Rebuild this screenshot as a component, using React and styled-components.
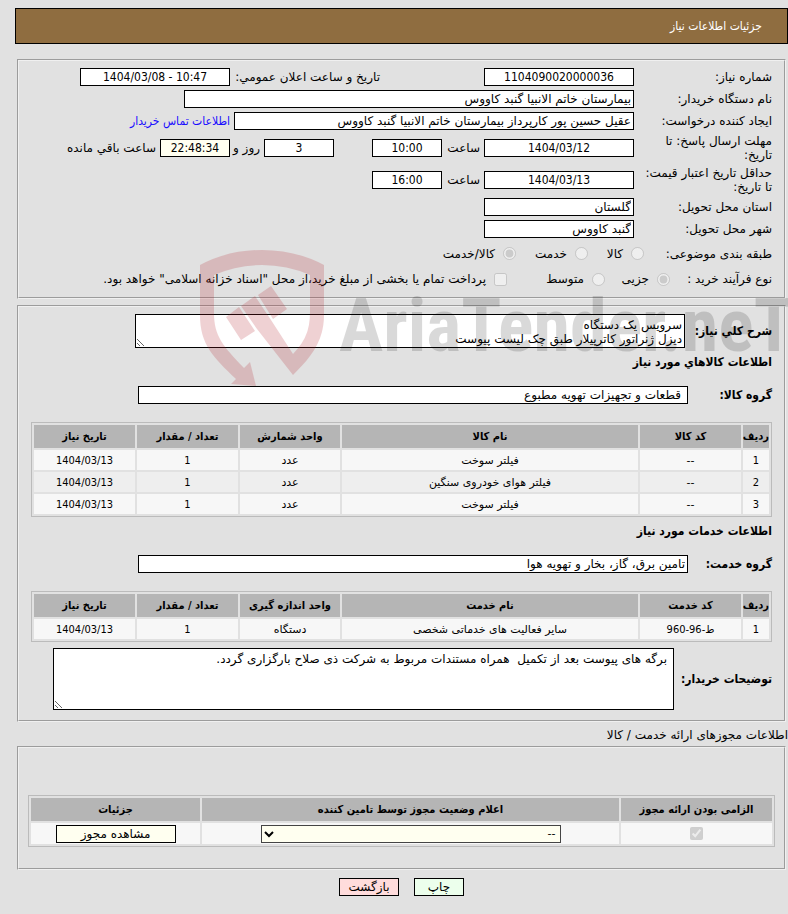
import React from "react";
import styled, { createGlobalStyle, css } from "styled-components";

const WIDE = '"DejaVu Sans", sans-serif';
const CONDENSED = '"DejaVu Sans Condensed", "DejaVu Sans", sans-serif';

const GlobalStyle = createGlobalStyle`
  *, *::before, *::after { box-sizing: border-box; }
  body {
    margin: 0;
    background: #e1e1e1;
    color: #000;
    font: 12px/14px ${WIDE};
  }
  input, textarea, select, button { font: inherit; color: inherit; }
`;

const Page = styled.main`
  position: relative;
  padding: 8px 0 16px 15px;
  overflow: hidden;
`;

const TitleBar = styled.header`
  display: flex;
  align-items: center;
  height: 36px;
  margin-bottom: 15px;
  padding: 0 25px;
  border: 1px solid #000;
  background: #8f6d40;
`;

const Title = styled.h1`
  margin: 0;
  color: #fff;
  font: 12px/14px ${CONDENSED};
`;

const Panel = styled.fieldset`
  min-width: 0;
  margin: 0 2px 6px;
  padding: ${(p) => p.$pad || "5px 12px 6px"};
  border: 2px groove #f0f0f0;
`;

const Row = styled.div`
  display: flex;
  align-items: center;
  min-height: ${(p) => p.$h || 22}px;
`;

const Label = styled.label`
  flex: none;
  width: ${(p) => (p.$w ? `${p.$w}px` : "auto")};
  padding-inline-end: ${(p) => p.$end || 0}px;
`;

const Bold = styled(Label)`
  font-family: ${CONDENSED};
  font-weight: bold;
`;

const boxed = css`
  border: 1px solid #000;
  border-radius: 0;
  background: ${(p) => p.$bg || "#fff"};
  outline: none;
`;

const Field = styled.input`
  ${boxed}
  flex: 0 1 ${(p) => p.$w}px;
  min-width: 0;
  width: ${(p) => p.$w}px;
  height: 18px;
  padding: 0 ${(p) => p.$pad || 2}px;
`;

const NumberField = styled(Field)`
  font-family: ${CONDENSED};
  text-align: center;
`;

const Unit = styled.span`
  flex: none;
  width: ${(p) => (p.$w ? `${p.$w}px` : "auto")};
  margin-inline: 4px;
  white-space: nowrap;
`;

const Spacer = styled.span`
  flex: none;
  width: ${(p) => p.$w}px;
`;

const ContactLink = styled.a`
  margin-inline-start: 4px;
  color: #1a0dff;
  font-family: ${CONDENSED};
  text-decoration: none;
  white-space: nowrap;
`;

const Choice = styled.label`
  display: flex;
  align-items: center;
  flex: ${(p) => (p.$w ? "none" : "0 1 auto")};
  width: ${(p) => (p.$w ? `${p.$w}px` : "auto")};
  gap: 8px;
  white-space: nowrap;
`;

const Tick = styled.input`
  flex: none;
  width: 13px;
  height: 13px;
  margin: 0;
  vertical-align: middle;
`;

const Area = styled.textarea`
  ${boxed}
  display: block;
  flex: 0 1 ${(p) => p.$w}px;
  min-width: 0;
  width: ${(p) => p.$w}px;
  height: ${(p) => p.$h}px;
  padding: ${(p) => p.$pad};
  overflow: hidden;
`;

const Heading = styled.h2`
  display: flex;
  align-items: center;
  margin: 0;
  height: 28px;
  font: bold 12px/14px ${CONDENSED};
`;

const Grid = styled.table`
  width: 100%;
  table-layout: fixed;
  border: 1px solid #bbb;
  border-spacing: 2px;
  text-align: center;
  font-size: 11px;

  th {
    height: 23px;
    padding: 0;
    background: #b5b5b5;
    font-family: ${CONDENSED};
    white-space: nowrap;
  }
  td { height: ${(p) => p.$rowHeight || 20}px; padding: 0; background: #f7f7f7; }
  tbody tr:nth-child(even) td { background: #eee; }
`;

const Cell = styled.td`
  && { padding-top: 2px; }
  font-family: ${(p) => (p.$numeric ? CONDENSED : WIDE)};
`;

const Col = styled.col`
  width: ${(p) => (p.$w ? `${p.$w}px` : "auto")};
`;

const GridWrap = styled.div`
  margin: ${(p) => p.$m};
`;

const StatusSelect = styled.select`
  ${boxed}
  display: block;
  width: 300px;
  max-width: 100%;
  height: 18px;
  margin: 0 auto;
  padding: 0;
  border-color: #444;
`;

const Button = styled.button`
  ${boxed}
  width: ${(p) => p.$w}px;
  height: 18px;
  padding: 0;
  font-size: 12px;
  line-height: 16px;
  cursor: pointer;
`;

const Section = styled.p`
  margin: 0 0 4px;
`;

const Footer = styled.footer`
  display: flex;
  justify-content: center;
  gap: 15px;
  padding-top: 2px;
`;

const Watermark = styled.div`
  position: absolute;
  top: 250px;
  left: 200px;
  display: flex;
  direction: ltr;
  gap: 14px;
  pointer-events: none;
`;

const Brand = styled.span`
  padding-top: 32px;
  color: rgba(0, 0, 0, 0.15);
  font: bold 74px/88px "Liberation Sans Narrow", "Roboto Condensed", "Liberation Sans", sans-serif;
  white-space: nowrap;
`;

function Shield() {
  return (
    <svg width="125" height="137" viewBox="200 250 125 137" fill="#b41e28" opacity="0.2" aria-hidden="true">
      <path d="M200 265Q228 250 262 250Q296 250 324 265V315C324 343 309 359 293 375L257 329L241 306L255 296L271 320L293 354C304 342 310 332 310 312V275Q287 265 262 265Q237 265 214 275V313C214 336 223 346 244 368L250 362L256 386L231 384L236 379C213 357 200 344 200 315Z" />
      <path d="M226 317L239 307L255 331L241 340ZM258 295L271 286L287 309L273 319Z" />
    </svg>
  );
}

function DataTable({ label, widths, heads, rows }) {
  return (
    <Grid aria-label={label}>
      <colgroup>
        {widths.map((w, i) => <Col key={i} $w={w} />)}
      </colgroup>
      <thead>
        <tr>{heads.map((h) => <th key={h} scope="col">{h}</th>)}</tr>
      </thead>
      <tbody>
        {rows.map((row, i) => (
          <tr key={i}>
            {row.map((cell, j) => <Cell key={j} $numeric={/\d/.test(cell)}>{cell}</Cell>)}
          </tr>
        ))}
      </tbody>
    </Grid>
  );
}

const COLUMNS = [26, 101, null, 100, 101, 101];

export default function App() {
  return (
    <Page dir="rtl" lang="fa">
      <GlobalStyle />
      <TitleBar><Title>جزئیات اطلاعات نیاز</Title></TitleBar>

      <Panel>
        <Row>
          <Label htmlFor="number" $w={138}>شماره نیاز:</Label>
          <NumberField id="number" readOnly $w={150} value="1104090020000036" />
          <Spacer $w={104} />
          <Label htmlFor="announced" $w={150}>تاريخ و ساعت اعلان عمومي:</Label>
          <NumberField id="announced" readOnly $w={150} dir="ltr" value="1404/03/08 - 10:47" />
        </Row>
        <Row>
          <Label htmlFor="org" $w={138}>نام دستگاه خریدار:</Label>
          <Field id="org" readOnly $w={450} value="بیمارستان خاتم الانبیا گنبد کاووس" />
        </Row>
        <Row>
          <Label htmlFor="creator" $w={138}>ایجاد کننده درخواست:</Label>
          <Field id="creator" readOnly $w={400} value="عقیل حسین پور کارپرداز بیمارستان خاتم الانبیا گنبد کاووس" />
          <ContactLink href="#contact">اطلاعات تماس خریدار</ContactLink>
        </Row>
        <Row $h={32}>
          <Label htmlFor="deadline" $w={138} $end={12}>مهلت ارسال پاسخ: تا تاریخ:</Label>
          <NumberField id="deadline" readOnly $w={150} value="1404/03/12" />
          <Unit $w={34}>ساعت</Unit>
          <NumberField aria-label="ساعت پاسخ" readOnly $w={70} value="10:00" />
          <Spacer $w={38} />
          <NumberField aria-label="روز باقی مانده" readOnly $w={70} value="3" />
          <Unit $w={26}>روز و</Unit>
          <NumberField aria-label="ساعت باقی مانده" readOnly $w={70} $bg="#fffff0" value="22:48:34" />
          <Unit>ساعت باقي مانده</Unit>
        </Row>
        <Row $h={32}>
          <Label htmlFor="validity" $w={138} $end={8}>حداقل تاریخ اعتبار قیمت: تا تاریخ:</Label>
          <NumberField id="validity" readOnly $w={150} value="1404/03/13" />
          <Unit $w={34}>ساعت</Unit>
          <NumberField aria-label="ساعت اعتبار" readOnly $w={70} value="16:00" />
        </Row>
        <Row>
          <Label htmlFor="province" $w={138}>استان محل تحویل:</Label>
          <Field id="province" readOnly $w={150} value="گلستان" />
        </Row>
        <Row>
          <Label htmlFor="city" $w={138}>شهر محل تحویل:</Label>
          <Field id="city" readOnly $w={150} value="گنبد کاووس" />
        </Row>
        <Row $h={27}>
          <Label as="span" $w={128}>طبقه بندی موضوعی:</Label>
          <Choice $w={56}><Tick type="radio" name="subject" disabled />کالا</Choice>
          <Choice $w={72}><Tick type="radio" name="subject" disabled />خدمت</Choice>
          <Choice><Tick type="radio" name="subject" disabled defaultChecked />کالا/خدمت</Choice>
        </Row>
        <Row $h={24}>
          <Label as="span" $w={102}>نوع فرآیند خرید :</Label>
          <Choice $w={65}><Tick type="radio" name="process" disabled defaultChecked />جزیی</Choice>
          <Choice $w={98}><Tick type="radio" name="process" disabled />متوسط</Choice>
          <Choice><Tick type="checkbox" disabled />پرداخت تمام یا بخشی از مبلغ خرید،از محل "اسناد خزانه اسلامی" خواهد بود.</Choice>
        </Row>
      </Panel>

      <Panel $pad="7px 12px 10px">
        <Row $h={34}>
          <Bold htmlFor="summary" $w={87}>شرح کلي نياز:</Bold>
          <Area id="summary" readOnly $w={550} $h={34} $pad="3px 2px 0" value={"سرویس یک دستگاه\nدیزل ژنراتور کاترپیلار طبق چک لیست پیوست"} />
        </Row>
        <Heading>اطلاعات کالاهاي مورد نياز</Heading>
        <Row $h={38}>
          <Bold htmlFor="goods" $w={84}>گروه کالا:</Bold>
          <Field id="goods" readOnly $w={550} $pad={6} value="قطعات و تجهیزات تهویه مطبوع" />
        </Row>
        <GridWrap $m="8px 0 0">
          <DataTable
            label="کالاها"
            widths={COLUMNS}
            heads={["ردیف", "کد کالا", "نام کالا", "واحد شمارش", "تعداد / مقدار", "تاریخ نیاز"]}
            rows={[
              ["1", "--", "فیلتر سوخت", "عدد", "1", "1404/03/13"],
              ["2", "--", "فیلتر هوای خودروی سنگین", "عدد", "1", "1404/03/13"],
              ["3", "--", "فیلتر سوخت", "عدد", "1", "1404/03/13"],
            ]}
          />
        </GridWrap>
        <Heading>اطلاعات خدمات مورد نیاز</Heading>
        <Row $h={38}>
          <Bold htmlFor="services" $w={84}>گروه خدمت:</Bold>
          <Field id="services" readOnly $w={550} value="تامین برق، گاز، بخار و تهویه هوا" />
        </Row>
        <GridWrap $m="8px 0 6px">
          <DataTable
            label="خدمات"
            widths={COLUMNS}
            heads={["ردیف", "کد خدمت", "نام خدمت", "واحد اندازه گیری", "تعداد / مقدار", "تاریخ نیاز"]}
            rows={[["1", "ط-96-960", "سایر فعالیت های خدماتی شخصی", "دستگاه", "1", "1404/03/13"]]}
          />
        </GridWrap>
        <Row>
          <Bold htmlFor="notes" $w={98}>توضیحات خریدار:</Bold>
          <Area id="notes" readOnly $w={621} $h={62} $pad="3px 6px" value="برگه های پیوست بعد از تکمیل  همراه مستندات مربوط به شرکت ذی صلاح بارگزاری گردد." />
        </Row>
      </Panel>

      <Section>اطلاعات مجوزهای ارائه خدمت / کالا</Section>
      <Panel $pad="47px 9px 21px">
        <Grid aria-label="مجوزها" $rowHeight={21}>
          <colgroup><Col $w={151} /><Col /><Col $w={169} /></colgroup>
          <thead>
            <tr>
              <th scope="col">الزامی بودن ارائه مجوز</th>
              <th scope="col">اعلام وضعیت مجوز توسط تامین کننده</th>
              <th scope="col">جزئیات</th>
            </tr>
          </thead>
          <tbody>
            <tr>
              <td><Tick type="checkbox" aria-label="الزامی" disabled defaultChecked /></td>
              <td>
                <StatusSelect aria-label="وضعیت مجوز" $bg="#fffff0" defaultValue="none">
                  <option value="none">--</option>
                </StatusSelect>
              </td>
              <td><Button type="button" $w={120} $bg="#fffff0">مشاهده مجوز</Button></td>
            </tr>
          </tbody>
        </Grid>
      </Panel>

      <Footer>
        <Button type="button" $w={50} $bg="#ecffec">چاپ</Button>
        <Button type="button" $w={60} $bg="#ffdcdc">بازگشت</Button>
      </Footer>

      <Watermark>
        <Shield />
        <Brand>AriaTender.neT</Brand>
      </Watermark>
    </Page>
  );
}
